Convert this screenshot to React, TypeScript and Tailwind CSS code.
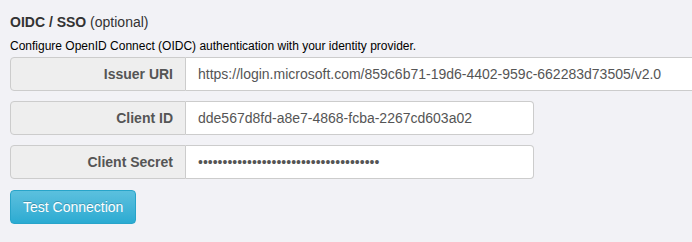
const fields = [
  {
    label: "Issuer URI",
    value: "https://login.microsoft.com/859c6b71-19d6-4402-959c-662283d73505/v2.0",
    type: "text",
    wide: true,
  },
  { label: "Client ID", value: "dde567d8fd-a8e7-4868-fcba-2267cd603a02", type: "text", wide: false },
  { label: "Client Secret", value: "x".repeat(37), type: "password", wide: false },
];

export default function App() {
  return (
    <div
      className="w-full h-[242px] overflow-hidden bg-[#f2f2f6] px-[10px] pt-[12px] text-[#333]"
      style={{ fontFamily: '"Liberation Sans", Arial, sans-serif' }}
    >
      <h3 className="text-[14px] leading-[20px]">
        <span className="font-bold">OIDC / SSO</span> (optional)
      </h3>
      <p className="mt-[6px] text-[12px] leading-[17px] text-black">
        Configure OpenID Connect (OIDC) authentication with your identity provider.
      </p>

      <div className="mt-[2px] flex flex-col gap-[10px]">
        {fields.map((f) => (
          <div key={f.label} className={`flex h-[34px] ${f.wide ? "w-[720px]" : "w-[524px]"}`}>
            <span className="flex w-[176px] shrink-0 items-center justify-end rounded-l-[4px] border border-[#ccc] bg-[#eee] px-[12px] text-[14px] font-bold text-[#555]">
              {f.label}
            </span>
            <input
              type={f.type}
              defaultValue={f.value}
              readOnly
              className="min-w-0 flex-1 rounded-r-[4px] border border-l-0 border-[#ccc] bg-white px-[12px] text-[14px] text-[#555] outline-none"
            />
          </div>
        ))}
      </div>

      <button className="mt-[11px] h-[34px] rounded-[4px] border border-[#28a4c9] bg-gradient-to-b from-[#5bc0de] to-[#2aabd2] px-[12px] text-[14px] text-white [text-shadow:0_-1px_0_rgba(0,0,0,0.2)]">
        Test Connection
      </button>
    </div>
  );
}
